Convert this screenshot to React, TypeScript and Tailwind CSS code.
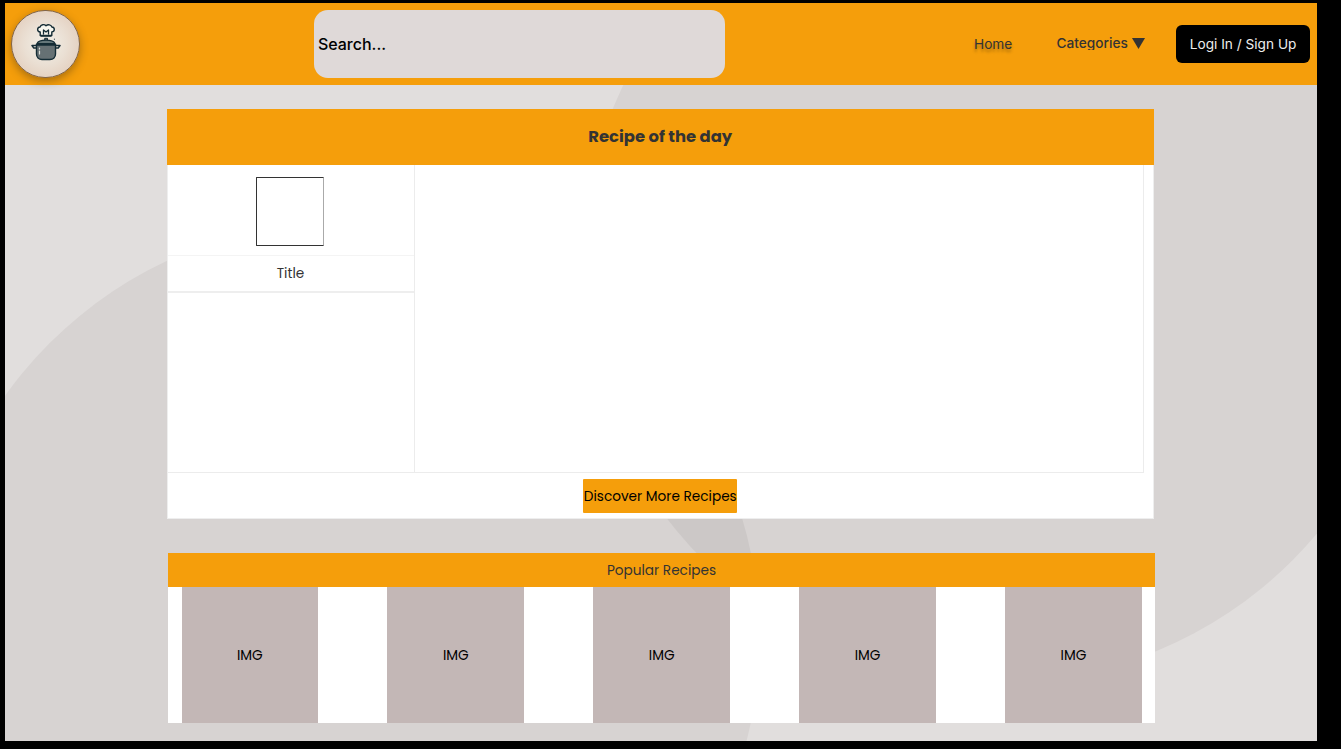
import React from "react";

const recipes = ["IMG", "IMG", "IMG", "IMG", "IMG"];

function Backdrop() {
  return (
    <svg className="absolute inset-0" width="1312" height="738" viewBox="5 3 1312 738" aria-hidden="true">
      <rect x="5" y="3" width="1312" height="738" fill="#e1dedd" />
      <circle cx="343.6" cy="637.5" r="416" fill="#d7d3d2" />
      <circle cx="998" cy="266.3" r="416.2" fill="#d7d3d2" />
      <clipPath id="left-disc">
        <circle cx="343.6" cy="637.5" r="416" />
      </clipPath>
      <circle cx="998" cy="266.3" r="416.2" fill="#ccc8c7" clipPath="url(#left-disc)" />
    </svg>
  );
}

function Logo() {
  return (
    <div className="mb-px ml-[6px] flex h-[68px] w-[69px] items-center justify-center rounded-full border border-[#80654c] bg-[radial-gradient(circle,#f2f0e8_0%,#eadfd3_45%,#dfc5b2_100%)] shadow-[0_3px_8px_rgba(70,50,20,0.45)]">
      <svg className="mb-[3px]" width="30" height="38" viewBox="0 0 30 38" fill="none" stroke="#142c35" strokeLinecap="round" strokeLinejoin="round">
        <path d="M9.2 12.5V9C5.8 8.6 5.8 4.3 9.1 4C9.8 1.4 13.3 1 15 2.7C16.9 1 20.2 1.6 20.9 4C24.2 4.4 24 8.6 20.8 9V12.5Z" fill="#f7f6ee" strokeWidth="1.4" />
        <path d="M12.5 11V7L15 9L17.5 7V11M10 13H20" strokeWidth="1.3" />
        <path d="M13.7 17V15.3H16.5V17" fill="#687578" strokeWidth="1" />
        <path d="M6 20.5C7 18 11 17.1 15 17.1S23 18 24 20.5Z" fill="#64777a" strokeWidth="1.1" />
        <path d="M5.5 22H24.5V31C24.5 34.2 22.2 36.5 19 36.5H11C7.8 36.5 5.5 34.2 5.5 31Z" fill="#667174" strokeWidth="1.4" />
        <path d="M5.5 21.3H24.5M5 25H2.8L1 22.6H5M25 25H27.2L29 22.6H25" strokeWidth="1.5" />
        <path d="M8.5 25V26M8.5 28V31" stroke="#dce0d9" strokeWidth="1.2" />
        <path d="M23.3 16.2H23.5" strokeWidth="1" />
      </svg>
    </div>
  );
}

function Header() {
  return (
    <header className="relative flex h-[82px] items-center bg-[#f59e0b] font-['Inter',sans-serif]">
      <Logo />
      <div className="ml-[234.4px] flex h-[68px] w-[410.6px] items-center rounded-[14px] bg-[#dfd9d8] pl-[3.5px] text-[16px] font-medium text-black">
        Search...
      </div>
      <nav className="ml-[249px] flex items-center text-[13.67px] text-[#333333]">
        <a className="mt-px w-[82.5px] [text-shadow:0_3px_3px_rgba(0,0,0,0.3)]">Home</a>
        <a className="-mt-[2px] flex w-[119.6px] items-center font-medium">
          <span className="block h-[13px] overflow-hidden leading-[13px]">Categories</span>
          <svg className="ml-[4px]" width="13" height="11" viewBox="0 0 13 11" fill="#333333">
            <path d="M0 0H13L6.5 11Z" />
          </svg>
        </a>
      </nav>
      <button className="mb-px h-[38px] w-[134px] rounded-[6px] bg-black pt-px text-[13.67px] text-[#eeeeee]">Logi In / Sign Up</button>
    </header>
  );
}

function RecipeOfTheDay() {
  return (
    <section className="ml-[161.5px] mt-[24px] h-[410px] w-[987.5px] border border-[#eeeeee] bg-white">
      <h1 className="-mx-px -mt-px flex h-[56px] items-center justify-center bg-[#f59e0b] text-[16.4px] font-bold text-[#333333]">
        Recipe of the day
      </h1>
      <div className="flex h-[308px] w-[976px] border-b border-r border-[#ececec]">
        <div className="flex w-[247px] flex-col border-r border-[#ececec]">
          <div className="flex h-[91px] items-center justify-center border-b border-[#f4f4f4]">
            <div className="mr-px mt-[2px] h-[69px] w-[68px] rounded-[1px] border border-[#333333] border-r-[#aaaaaa]" />
          </div>
          <div className="flex h-[37px] items-center justify-center border-b-2 border-[#eeeeee] pt-[2px] text-[13.67px] text-[#333333]">Title</div>
        </div>
      </div>
      <div className="flex justify-center pt-[6px]">
        <button className="h-[34px] w-[154px] whitespace-nowrap rounded-[1px] bg-[#f59e0b] pt-[2px] text-[13.67px] text-black">
          Discover More Recipes
        </button>
      </div>
    </section>
  );
}

function PopularRecipes() {
  return (
    <section className="ml-[163px] mt-[34px] h-[170px] w-[987px] bg-white">
      <h2 className="flex h-[34px] items-center justify-center bg-[#f59e0b] pt-[2px] text-[13.67px] text-[#333333]">Popular Recipes</h2>
      <div className="flex justify-between pl-[13.5px] pr-[13.2px]">
        {recipes.map((label, index) => (
          <div key={index} className="flex h-[136px] w-[136.7px] items-center justify-center bg-[#c3b7b6] pt-[2px] text-[13.67px] text-black">
            {label}
          </div>
        ))}
      </div>
    </section>
  );
}

export default function App() {
  return (
    <div className="h-[749px] w-[1341px] overflow-hidden bg-black pl-[5px] pt-[3px] font-['Poppins','Inter',sans-serif]">
      <div className="relative h-[738px] w-[1312px] overflow-hidden">
        <Backdrop />
        <div className="relative">
          <Header />
          <RecipeOfTheDay />
          <PopularRecipes />
        </div>
      </div>
    </div>
  );
}
